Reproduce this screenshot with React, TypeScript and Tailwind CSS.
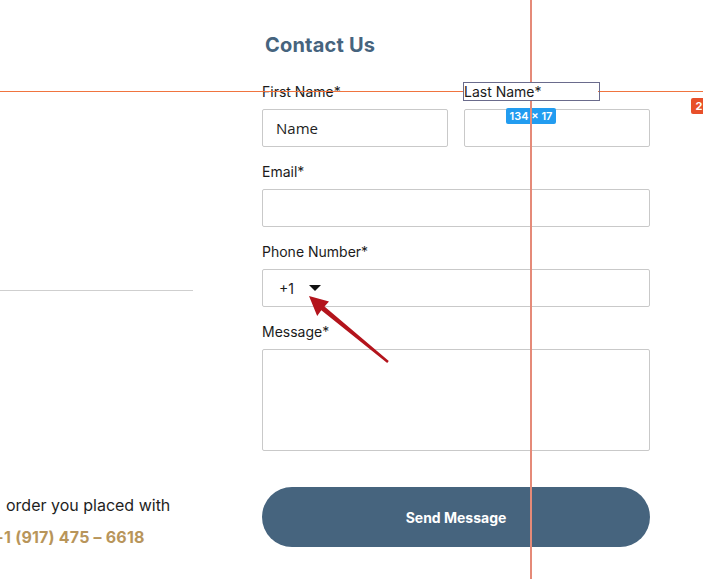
import { useState } from 'react';

const inputClass =
  'block w-full h-[38px] rounded-[2px] border border-[#c9c9c9] bg-white px-[13px] text-[15px] text-[#222] outline-none';

function Field({ label, children }: { label: string; children: React.ReactNode }) {
  return (
    <div className="flex flex-col">
      <label className="h-[17px] text-[14px] leading-[17px] text-[#1b1b1b]">{label}</label>
      <div className="mt-[9px]">{children}</div>
    </div>
  );
}

export default function App() {
  const [firstName, setFirstName] = useState('Name');

  return (
    <div className="relative h-[579px] w-[703px] overflow-hidden bg-white font-['Inter','Liberation_Sans',sans-serif]">
      <div className="flex">
        {/* left info column */}
        <div className="flex w-[193px] flex-col">
          <div className="mt-[290px] h-px w-full bg-[#cfcfcf]" />
          <p className="mt-[202px] whitespace-nowrap pl-[6px] text-[16px] leading-[24px] text-[#1e1e1e]">
            order you placed with
          </p>
          <p className="ml-[-7px] mt-[8px] whitespace-nowrap text-[16px] font-bold leading-[24px] tracking-[0.2px] text-[#b8955a]">
            +1 (917) 475 – 6618
          </p>
        </div>

        {/* contact form */}
        <form className="ml-[69px] flex w-[388px] flex-col" onSubmit={(e) => e.preventDefault()}>
          <h2 className="mt-[31px] pl-[3px] text-[20px] font-bold leading-[28px] tracking-[0.2px] text-[#46647e]">
            Contact Us
          </h2>

          <div className="mt-[24px] grid grid-cols-2 gap-x-[16px]">
            <Field label="First Name*">
              <input
                className={inputClass + " font-['Open_Sans',sans-serif]"}
                value={firstName}
                onChange={(e) => setFirstName(e.target.value)}
              />
            </Field>
            <div className="flex flex-col">
              <label className="relative z-20 h-[17px] w-[134px] bg-white text-[14px] leading-[17px] text-[#1b1b1b]">
                Last Name*
                <span className="absolute -inset-[1px] -right-[2px] border-[1.5px] border-[#6a6b8c]" />
              </label>
              <div className="mt-[9px]">
                <input className={inputClass} />
              </div>
            </div>
          </div>

          <div className="mt-[16px]">
            <Field label="Email*">
              <input className={inputClass} />
            </Field>
          </div>

          <div className="mt-[16px]">
            <Field label="Phone Number*">
              <div className="flex h-[38px] items-center rounded-[2px] border border-[#c9c9c9] pl-[16px]">
                <span className="text-[14px] text-[#1b1b1b]">+1</span>
                <svg className="ml-[15px]" width="12" height="6" viewBox="0 0 12 6">
                  <path d="M0 0H12L6 6Z" fill="#111" />
                </svg>
                <input className="ml-2 h-full flex-1 bg-transparent outline-none" />
              </div>
            </Field>
          </div>

          <div className="mt-[16px]">
            <Field label="Message*">
              <textarea className="block h-[102px] w-full resize-none rounded-[2px] border border-[#c9c9c9] outline-none" />
            </Field>
          </div>

          <button
            type="submit"
            className="mt-[36px] h-[60px] w-full rounded-full bg-[#46647e] text-[14px] font-bold text-white"
          >
            Send Message
          </button>
        </form>
      </div>

      {/* inspector overlay */}
      <div className="pointer-events-none absolute left-0 top-[91px] z-10 h-px w-full bg-[#f0743f]" />
      <div className="pointer-events-none absolute left-[530px] top-0 z-10 h-full w-[2px] bg-[#e58a78]" />
      <div className="pointer-events-none absolute left-[506px] top-[108px] z-[5] flex h-[16px] w-[50px] items-center justify-center rounded-[2px] bg-[#229cf0] text-[11px] font-semibold text-white">
        134 × 17
      </div>
      <div className="pointer-events-none absolute left-[691px] top-[98px] z-10 flex h-[16px] w-[16px] items-center justify-center rounded-[2px] bg-[#e8502a] text-[11px] font-bold text-white">
        2
      </div>

      {/* annotation arrow */}
      <svg className="pointer-events-none absolute left-0 top-0 z-30" width="703" height="579">
        <polygon
          points="309,296 329,301.5 324.5,306.5 388.8,361.1 387.2,362.9 321.3,310.3 317.2,316"
          fill="#b3141c"
        />
      </svg>
    </div>
  );
}
